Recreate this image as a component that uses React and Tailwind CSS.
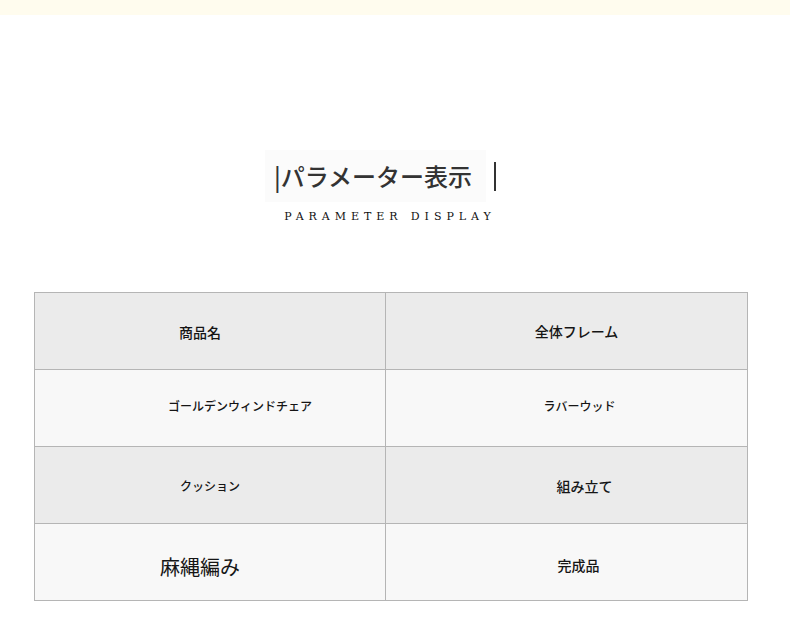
const rows = [
  [
    { text: "商品名", size: "text-[14px]", shift: "pr-[20px] pt-[1px]" },
    { text: "全体フレーム", size: "text-[14px]", shift: "pl-[20px] pb-[1px]" },
  ],
  [
    { text: "ゴールデンウィンドチェア", size: "text-[12px]", shift: "pl-[60px] pb-[4px]" },
    { text: "ラバーウッド", size: "text-[12px]", shift: "pl-[26px] pb-[4px]" },
  ],
  [
    { text: "クッション", size: "text-[12px]", shift: "pt-[2px]" },
    { text: "組み立て", size: "text-[14px]", shift: "pl-[36px] pt-[2px]" },
  ],
  [
    { text: "麻縄編み", size: "text-[20px] font-normal text-[#333]", shift: "pr-[20px] pt-[10px]" },
    { text: "完成品", size: "text-[14px]", shift: "pl-[24px] pt-[6px]" },
  ],
];

function Cell({ cell, bg }) {
  return (
    <div
      className={`flex h-[77px] items-center justify-center border-r border-b border-[#b5b5b5] ${bg} ${cell.shift}`}
    >
      <span className={`font-medium leading-none text-[#151515] ${cell.size}`}>
        {cell.text}
      </span>
    </div>
  );
}

export default function App() {
  return (
    <div
      className="min-h-[628px] w-[790px] bg-white"
      style={{ fontFamily: '"Noto Sans CJK JP", "Noto Sans", sans-serif' }}
    >
      <div className="h-[15px] bg-[#fffcee]" />

      <div className="pt-[135px]">
        <div className="flex items-center justify-center pr-[29px]">
          <div className="flex h-[52px] w-[221px] items-center bg-[#fbfbfb] pl-[9px]">
            <span className="whitespace-nowrap text-[24px] font-medium leading-none text-[#333]">
              |パラメーター表示
            </span>
          </div>
          <div className="ml-[8px] h-[29px] w-[2px] bg-[#333]" />
        </div>
        <p
          className="mt-[7px] whitespace-nowrap pr-[10px] text-center text-[11px] leading-[16px] tracking-[0.45em] text-[#111]"
          style={{ fontFamily: '"DejaVu Serif", "Liberation Serif", serif' }}
        >
          PARAMETER DISPLAY
        </p>
      </div>

      <div className="ml-[34px] mt-[67px] grid w-[714px] grid-cols-[351px_362px] border-t border-l border-[#b5b5b5]">
        {rows.map((row, i) =>
          row.map((cell, j) => (
            <Cell
              key={`${i}-${j}`}
              cell={cell}
              bg={i % 2 === 0 ? "bg-[#ebebeb]" : "bg-[#f8f8f8]"}
            />
          ))
        )}
      </div>
    </div>
  );
}
